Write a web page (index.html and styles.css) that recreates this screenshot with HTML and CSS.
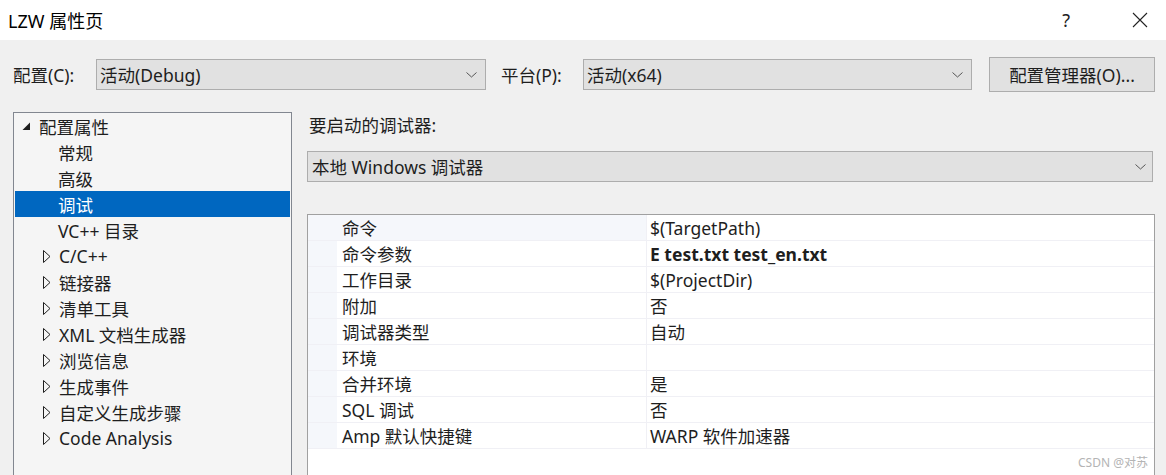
FILE: index.html
```html
<!DOCTYPE html>
<html lang="zh-CN">
<head>
    <meta charset="UTF-8">
    <title>LZW 属性页</title>
    <link rel="stylesheet" href="styles.css">
</head>
<body>

  <div class="titlebar">
    <div class="title">LZW 属性页</div>
    <div class="title-buttons">
      <span class="help">?</span>
      <svg class="close" width="16" height="16" viewBox="0 0 16 16">
        <path d="M1 1 L15 15 M15 1 L1 15" stroke="#222" stroke-width="1.1" fill="none"/>
      </svg>
    </div>
  </div>

  <div class="dialog">

    <div class="config-row">
      <label class="config-label">配置(C):</label>
      <div class="combo combo-config">
        <span>活动(Debug)</span>
        <svg class="chevron" width="11" height="6" viewBox="0 0 11 6"><path d="M0.5 0.5 L5.5 5 L10.5 0.5" stroke="#555" fill="none"/></svg>
      </div>
      <label class="platform-label">平台(P):</label>
      <div class="combo combo-platform">
        <span>活动(x64)</span>
        <svg class="chevron" width="11" height="6" viewBox="0 0 11 6"><path d="M0.5 0.5 L5.5 5 L10.5 0.5" stroke="#555" fill="none"/></svg>
      </div>
      <button class="manager-btn">配置管理器(O)...</button>
    </div>

    <div class="main">

      <div class="tree">
        <div class="node root">
          <svg class="expander" width="9" height="9" viewBox="0 0 9 9"><path d="M8 0.5 L8 8 L0.5 8 Z" fill="#1e1e1e"/></svg>
          配置属性
        </div>
        <div class="node leaf">常规</div>
        <div class="node leaf">高级</div>
        <div class="node leaf selected">调试</div>
        <div class="node leaf">VC++ 目录</div>
        <div class="node group"><svg class="arrow" width="8" height="13" viewBox="0 0 8 13"><path d="M0.5 0.5 L7 6.5 L0.5 12.5 Z" stroke="#1e1e1e" fill="none"/></svg>C/C++</div>
        <div class="node group"><svg class="arrow" width="8" height="13" viewBox="0 0 8 13"><path d="M0.5 0.5 L7 6.5 L0.5 12.5 Z" stroke="#1e1e1e" fill="none"/></svg>链接器</div>
        <div class="node group"><svg class="arrow" width="8" height="13" viewBox="0 0 8 13"><path d="M0.5 0.5 L7 6.5 L0.5 12.5 Z" stroke="#1e1e1e" fill="none"/></svg>清单工具</div>
        <div class="node group"><svg class="arrow" width="8" height="13" viewBox="0 0 8 13"><path d="M0.5 0.5 L7 6.5 L0.5 12.5 Z" stroke="#1e1e1e" fill="none"/></svg>XML 文档生成器</div>
        <div class="node group"><svg class="arrow" width="8" height="13" viewBox="0 0 8 13"><path d="M0.5 0.5 L7 6.5 L0.5 12.5 Z" stroke="#1e1e1e" fill="none"/></svg>浏览信息</div>
        <div class="node group"><svg class="arrow" width="8" height="13" viewBox="0 0 8 13"><path d="M0.5 0.5 L7 6.5 L0.5 12.5 Z" stroke="#1e1e1e" fill="none"/></svg>生成事件</div>
        <div class="node group"><svg class="arrow" width="8" height="13" viewBox="0 0 8 13"><path d="M0.5 0.5 L7 6.5 L0.5 12.5 Z" stroke="#1e1e1e" fill="none"/></svg>自定义生成步骤</div>
        <div class="node group"><svg class="arrow" width="8" height="13" viewBox="0 0 8 13"><path d="M0.5 0.5 L7 6.5 L0.5 12.5 Z" stroke="#1e1e1e" fill="none"/></svg>Code Analysis</div>
      </div>

      <div class="pane">
        <div class="pane-label">要启动的调试器:</div>
        <div class="combo combo-debugger">
          <span>本地 Windows 调试器</span>
          <svg class="chevron" width="11" height="6" viewBox="0 0 11 6"><path d="M0.5 0.5 L5.5 5 L10.5 0.5" stroke="#555" fill="none"/></svg>
        </div>

        <div class="grid">
          <div class="row first"><div class="gutter"></div><div class="name">命令</div><div class="value">$(TargetPath)</div></div>
          <div class="row"><div class="gutter"></div><div class="name">命令参数</div><div class="value bold">E test.txt test_en.txt</div></div>
          <div class="row"><div class="gutter"></div><div class="name">工作目录</div><div class="value">$(ProjectDir)</div></div>
          <div class="row"><div class="gutter"></div><div class="name">附加</div><div class="value">否</div></div>
          <div class="row"><div class="gutter"></div><div class="name">调试器类型</div><div class="value">自动</div></div>
          <div class="row"><div class="gutter"></div><div class="name">环境</div><div class="value"></div></div>
          <div class="row"><div class="gutter"></div><div class="name">合并环境</div><div class="value">是</div></div>
          <div class="row"><div class="gutter"></div><div class="name">SQL 调试</div><div class="value">否</div></div>
          <div class="row"><div class="gutter"></div><div class="name">Amp 默认快捷键</div><div class="value">WARP 软件加速器</div></div>
          <span class="watermark">CSDN @对苏</span>
        </div>
      </div>

    </div>
  </div>

</body>
</html>
```

FILE: styles.css
```css
body {
    margin: 0;
    width: 1166px;
    height: 475px;
    overflow: hidden;
    background-color: #f0f0f0;
    font-family: "Noto Sans", "Noto Sans CJK SC", sans-serif;
    font-size: 17.5px;
    color: #1e1e1e;
}

/* barre de titre */
.titlebar {
    height: 40px;
    background-color: #fff;
    display: flex;
    align-items: center;
    justify-content: space-between;
}

.title {
    padding-left: 8px;
    font-size: 18px;
    color: #000;
}

.title-buttons {
    display: flex;
    align-items: center;
    padding-right: 18px;
}

.help {
    font-size: 18px;
    color: #222;
    margin-right: 62px;
}

/* ligne configuration / plateforme */
.config-row {
    display: flex;
    align-items: center;
    height: 35px;
    margin-top: 17px;
    padding-left: 13px;
}

.config-label {
    width: 83px;
}

.platform-label {
    width: 82px;
    margin-left: 15px;
}

.combo {
    height: 31px;
    box-sizing: border-box;
    border: 1px solid #adadad;
    background-color: #e1e1e1;
    display: flex;
    align-items: center;
    justify-content: space-between;
    padding: 0 8px 0 3px;
}

.combo-config {
    width: 390px;
}

.combo-platform {
    width: 389px;
}

.manager-btn {
    margin-left: 17px;
    width: 166px;
    height: 35px;
    border: 1px solid #adadad;
    background-color: #e1e1e1;
    font-family: inherit;
    font-size: 17.5px;
    color: #1e1e1e;
    padding: 0;
}

/* zone principale */
.main {
    display: flex;
    margin-top: 20px;
    padding-left: 13px;
}

.tree {
    width: 279px;
    height: 363px;
    box-sizing: border-box;
    border: 1px solid #828790;
    border-bottom: none;
    background-color: #f5f5f5;
    padding: 0 1px;
}

.node {
    height: 26px;
    display: flex;
    align-items: center;
}

.root {
    padding-left: 7px;
}

.expander {
    margin-right: 8px;
}

.leaf {
    padding-left: 43px;
}

.group {
    padding-left: 28px;
}

.arrow {
    margin-right: 8px;
}

.selected {
    background-color: #0067c0;
    color: #fff;
}

.pane {
    margin-left: 15px;
    width: 848px;
}

.pane-label {
    height: 26px;
    line-height: 26px;
    padding-left: 2px;
}

.combo-debugger {
    margin-top: 13px;
    width: 846px;
    padding-left: 4px;
    padding-right: 6px;
}

/* grille des propriétés */
.grid {
    position: relative;
    margin-top: 32px;
    border: 1px solid #a0a0a0;
    border-bottom: none;
    background-color: #fff;
    height: 262px;
    box-sizing: border-box;
}

.row {
    display: flex;
    height: 26px;
    box-sizing: border-box;
    border-bottom: 1px solid #f0f0f5;
}

.gutter {
    width: 29px;
    background-color: #f5f7fb;
}

.row .name {
    width: 304px;
    padding-left: 5px;
    border-right: 1px solid #f0f0f5;
    display: flex;
    align-items: center;
}

.row.first .name {
    background-color: #f5f7fb;
}

.row .value {
    padding-left: 3px;
    display: flex;
    align-items: center;
}

.bold {
    font-weight: bold;
}

.watermark {
    position: absolute;
    right: 6px;
    top: 238px;
    font-size: 12px;
    color: #b4b4b4;
}
```
